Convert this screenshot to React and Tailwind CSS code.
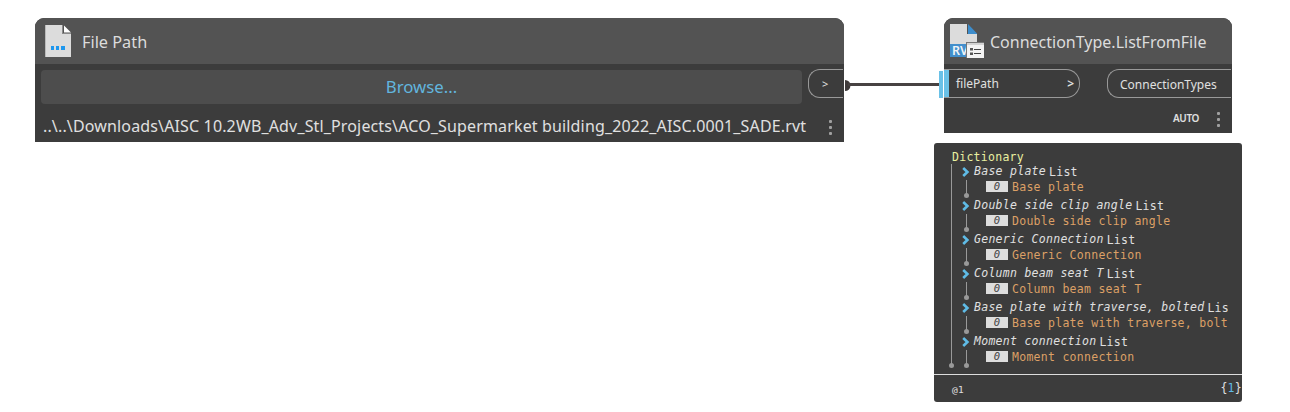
import React from "react";

const groups = [
  "Base plate",
  "Double side clip angle",
  "Generic Connection",
  "Column beam seat T",
  "Base plate with traverse, bolted",
  "Moment connection",
];

function FileIcon() {
  return (
    <svg className="ml-[10px] mt-[7px] shrink-0" width="27" height="32" viewBox="0 0 27 32">
      <path d="M0 0H17V9H26V32H0Z" fill="#dcdcdc" />
      <path d="M0 0H1V32H0Z" fill="#b9b9b9" />
      <path d="M17 0V9H26V8H18V0Z" fill="#8a8a8a" />
      <path d="M19 0.5L26 7.5H19Z" fill="#ffffff" />
      <path d="M6 21h3v4h-3zM11 21h3v4h-3zM16 21h4v4h-4z" fill="#1e97ee" />
    </svg>
  );
}

function RevitIcon() {
  return (
    <svg className="ml-[6px] mt-[6px] shrink-0" width="35" height="35" viewBox="0 0 35 35">
      <path d="M0 0H17V10H27V20H0Z" fill="#dcdcdc" />
      <path d="M18 0L27 9.5V10H18Z" fill="#3d8dcc" />
      <path d="M0 20H27V33H0Z" fill="#438fcc" />
      <text x="2" y="31.3" fontFamily="Noto Sans, sans-serif" fontWeight="600" fontSize="12.5" fill="#f0f4f8">RV</text>
      <path d="M17 19H34V34H17Z" fill="#f4f4f4" />
      <path d="M16 18H34V19H17V34H16Z" fill="#777777" />
      <path d="M17 19H34V21H17Z" fill="#d4d4d4" />
      <path d="M20 24h3v2.5h-3zM20 28.5h3v2.5h-3z" fill="#555555" />
      <path d="M24 25h7v1h-7zM24 29h7v1h-7z" fill="#444444" />
    </svg>
  );
}

function Dots() {
  return (
    <div className="flex w-[3px] flex-col gap-[3px]">
      <i className="size-[3px] rounded-[1px] bg-[#a0a0a0]" />
      <i className="size-[3px] rounded-[1px] bg-[#a0a0a0]" />
      <i className="size-[3px] rounded-[1px] bg-[#a0a0a0]" />
    </div>
  );
}

function Wire() {
  return (
    <svg className="z-10 -mr-[5px] mt-[60px] shrink-0" width="95" height="14" viewBox="0 0 95 14">
      <path d="M1 2A5 5 0 0 1 1 13Z" fill="#3f3b3b" />
      <path d="M4 6.5H95" stroke="#474242" strokeWidth="3" />
    </svg>
  );
}

function Group({ name }) {
  return (
    <div className="flex h-[34px]">
      <svg className="shrink-0" width="12" height="34" viewBox="0 0 12 34">
        <path d="M1.2 4L5.4 8L1.2 12" fill="none" stroke="#5fbbe6" strokeWidth="2.6" />
        <path d="M4.5 16V32" stroke="#999999" />
        <circle cx="4.5" cy="31.5" r="2.5" fill="#999999" />
      </svg>
      <div className="min-w-0 flex-1">
        <div className="flex h-[16px] gap-[3px] leading-[15px]">
          <span className="italic text-[#e0e0e0]">{name}</span>
          <span className="pt-px text-[#e0e0e0]">List</span>
        </div>
        <div className="flex h-[15px] leading-[15px]">
          <span className="ml-[12px] mr-[4px] mt-px h-[11px] w-[22px] shrink-0 bg-[#dddddd] text-center text-[10.5px] italic leading-[11px] text-[#444444]">0</span>
          <span className="text-[#dca066]">{name}</span>
        </div>
      </div>
    </div>
  );
}

export default function App() {
  return (
    <main className="flex h-[412px] w-[1290px] items-start overflow-hidden bg-white pl-[35px] pt-[18px] font-['Noto_Sans',sans-serif] text-[#e0e0e0]">
      <section className="h-[124px] w-[809px] shrink-0 overflow-hidden rounded-t-[9px] bg-[#3c3c3c]">
        <header className="flex h-[46px] bg-[#535353]">
          <FileIcon />
          <h1 className="ml-[10px] whitespace-nowrap text-[16.3px] leading-[48px] text-[#dcdcdc]">File Path</h1>
        </header>
        <div className="flex pl-[6px] pt-[5px]">
          <button className="mt-px h-[34px] w-[761px] rounded-[4px] bg-[#4d4d4d] text-[16.8px] leading-[34px] text-[#62b5de]">Browse...</button>
          <div className="ml-[6px] h-[29px] w-[35px] rounded-l-[12px] border border-r-0 border-[#999999] pl-[13px] text-[11px] leading-[28px]">&gt;</div>
        </div>
        <div className="flex h-[39px] pl-[8px]">
          <span className="w-[784px] whitespace-nowrap pt-[11px] text-[16px] leading-[22px] tracking-[0.147px]">..\..\Downloads\AISC 10.2WB_Adv_Stl_Projects\ACO_Supermarket building_2022_AISC.0001_SADE.rvt</span>
          <div className="pl-[2px] pt-[16px]"><Dots /></div>
        </div>
      </section>

      <Wire />

      <div className="flex w-[308px] shrink-0 flex-col">
        <section className="ml-[5px] flex w-[293px]">
          <div className="mr-px mt-[53px] h-[27px] w-[4px] bg-[#6ac1e7]" />
          <div className="h-[115px] w-[288px] overflow-hidden rounded-t-[9px] bg-[#3c3c3c]">
            <header className="flex h-[46px] bg-[#535353]">
              <RevitIcon />
              <h2 className="ml-[5px] whitespace-nowrap text-[16px] leading-[48px] text-[#dcdcdc]">ConnectionType.ListFromFile</h2>
            </header>
            <div className="flex justify-between pr-px pt-[5px]">
              <div className="flex h-[29px] w-[136px] items-center rounded-r-[14px] border border-l-0 border-[#999999] text-[12px]">
                <i className="h-[27px] w-[5px] bg-[#6ac1e7]" />
                <span className="ml-[7px] flex-1">filePath</span>
                <span className="mr-[5px] mt-px font-semibold">&gt;</span>
              </div>
              <div className="h-[29px] w-[124px] rounded-l-[12px] border border-r-0 border-[#999999] pl-[12px] text-[12px] leading-[29px]">ConnectionTypes</div>
            </div>
            <div className="flex h-[35px] justify-end pr-[12px]">
              <span className="mr-[18px] text-[10px] font-semibold leading-[41px] tracking-[-0.4px]">AUTO</span>
              <div className="pt-[14px]"><Dots /></div>
            </div>
          </div>
        </section>

        <section className="mt-[10px] h-[259px] w-[308px] overflow-hidden rounded-[3px] bg-[#3c3c3c] font-['DejaVu_Sans_Mono',monospace] text-[11.5px] tracking-[0.277px]">
          <div className="h-[231px] w-[294px] overflow-hidden whitespace-pre pt-[6px]">
            <div className="h-[15px] pl-[18px] leading-[17px] text-[#eaf0a0]">Dictionary</div>
            <div className="flex pl-[15px]">
              <svg className="shrink-0" width="13" height="205" viewBox="0 0 13 205">
                <path d="M2.5 0V201" stroke="#999999" />
                <circle cx="2.5" cy="201.5" r="2.5" fill="#999999" />
              </svg>
              <div className="min-w-0 flex-1">
                {groups.map((name) => (
                  <Group key={name} name={name} />
                ))}
              </div>
            </div>
          </div>
          <footer className="flex h-[28px] justify-between border-t border-[#dddddd] pl-[18px] leading-[27px]">
            <span className="pt-px text-[9.5px]">@1</span>
            <span>{"{"}<span className="text-[#5fbbe6]">1</span>{"}"}</span>
          </footer>
        </section>
      </div>
    </main>
  );
}
